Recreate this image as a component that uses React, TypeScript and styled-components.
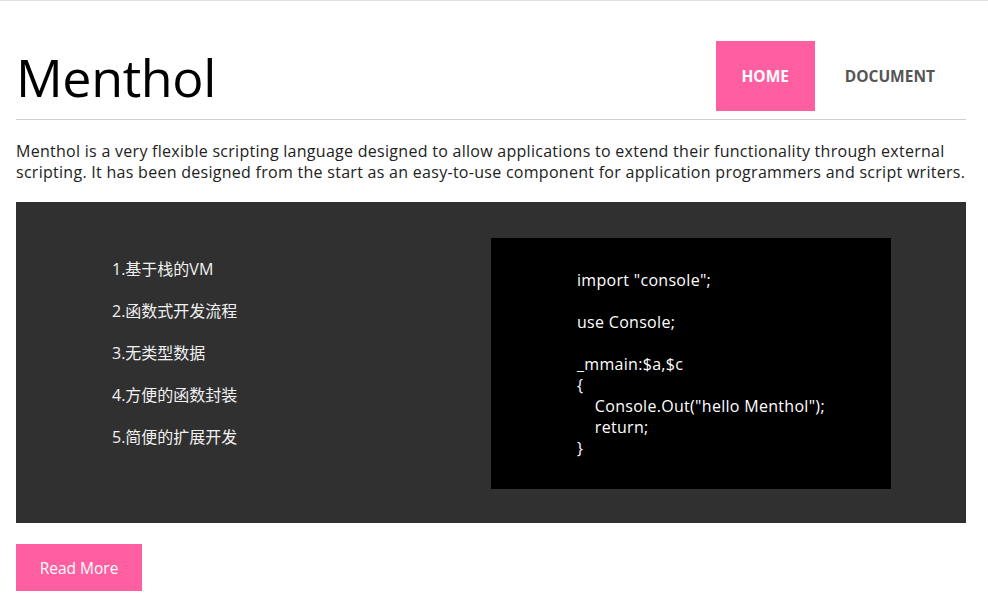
import React from "react";
import styled, { createGlobalStyle } from "styled-components";

const Global = createGlobalStyle`
  html, body { margin: 0; padding: 0; background: #fff; }
  body { font-family: "Open Sans", "Noto Sans CJK SC", sans-serif; border-top: 1px solid #e0e0e0; }
`;

const Page = styled.div`
  padding: 0 22px 0 16px;
`;

const Header = styled.header`
  display: flex;
  align-items: flex-start;
  justify-content: space-between;
  padding-top: 40px;
  height: 78px;
  border-bottom: 1px solid #d0d0d0;
`;

const Title = styled.h1`
  margin: 0;
  font-size: 52px;
  font-weight: 400;
  line-height: 72px;
  color: #000;
  letter-spacing: -0.4px;
`;

const Nav = styled.nav`
  display: flex;
`;

const NavItem = styled.a<{ $active?: boolean }>`
  display: flex;
  align-items: center;
  justify-content: center;
  box-sizing: border-box;
  height: 70px;
  padding: ${(p) => (p.$active ? "0" : "0 31px 0 30px")};
  width: ${(p) => (p.$active ? "99px" : "auto")};
  background: ${(p) => (p.$active ? "#ff5fa0" : "transparent")};
  color: ${(p) => (p.$active ? "#fff" : "#555")};
  font-size: 15.5px;
  font-weight: 700;
  text-decoration: none;
`;

const Intro = styled.p`
  margin: 21px 0 0;
  font-size: 16px;
  letter-spacing: 0.28px;
  line-height: 21px;
  color: #222;
`;

const Showcase = styled.section`
  display: grid;
  grid-template-columns: 475px 475px;
  margin-top: 19px;
  background: #303030;
  padding: 36px 0 34px;
`;

const Features = styled.ol`
  list-style: none;
  margin: 0;
  padding: 21px 0 0 96px;
`;

const Feature = styled.li`
  font-size: 16px;
  line-height: 21px;
  color: #f0f0f0;
  margin-bottom: 21px;
`;

const Code = styled.pre`
  margin: 0;
  width: 400px;
  box-sizing: border-box;
  background: #000;
  color: #fff;
  padding: 32px 0 30px 86px;
  font-family: "Open Sans", sans-serif;
  font-size: 16px;
  letter-spacing: 0.3px;
  line-height: 21px;
  white-space: pre;
`;

const Button = styled.a`
  display: inline-flex;
  align-items: center;
  justify-content: center;
  margin-top: 21px;
  width: 126px;
  height: 47px;
  background: #ff5fa0;
  color: #fff;
  font-size: 15.5px;
  text-decoration: none;
`;

const features = [
  "1.基于栈的VM",
  "2.函数式开发流程",
  "3.无类型数据",
  "4.方便的函数封装",
  "5.简便的扩展开发",
];

const code = `import "console";

use Console;

_mmain:$a,$c
{
    Console.Out("hello Menthol");
    return;
}`;

export default function App() {
  return (
    <>
      <Global />
      <Page>
        <Header>
          <Title>Menthol</Title>
          <Nav>
            <NavItem $active href="#">HOME</NavItem>
            <NavItem href="#">DOCUMENT</NavItem>
          </Nav>
        </Header>
        <Intro>
          Menthol is a very flexible scripting language designed to allow applications to extend their functionality through external
          scripting. It has been designed from the start as an easy-to-use component for application programmers and script writers.
        </Intro>
        <Showcase>
          <Features>
            {features.map((f) => (
              <Feature key={f}>{f}</Feature>
            ))}
          </Features>
          <Code>{code}</Code>
        </Showcase>
        <Button href="#">Read More</Button>
      </Page>
    </>
  );
}
